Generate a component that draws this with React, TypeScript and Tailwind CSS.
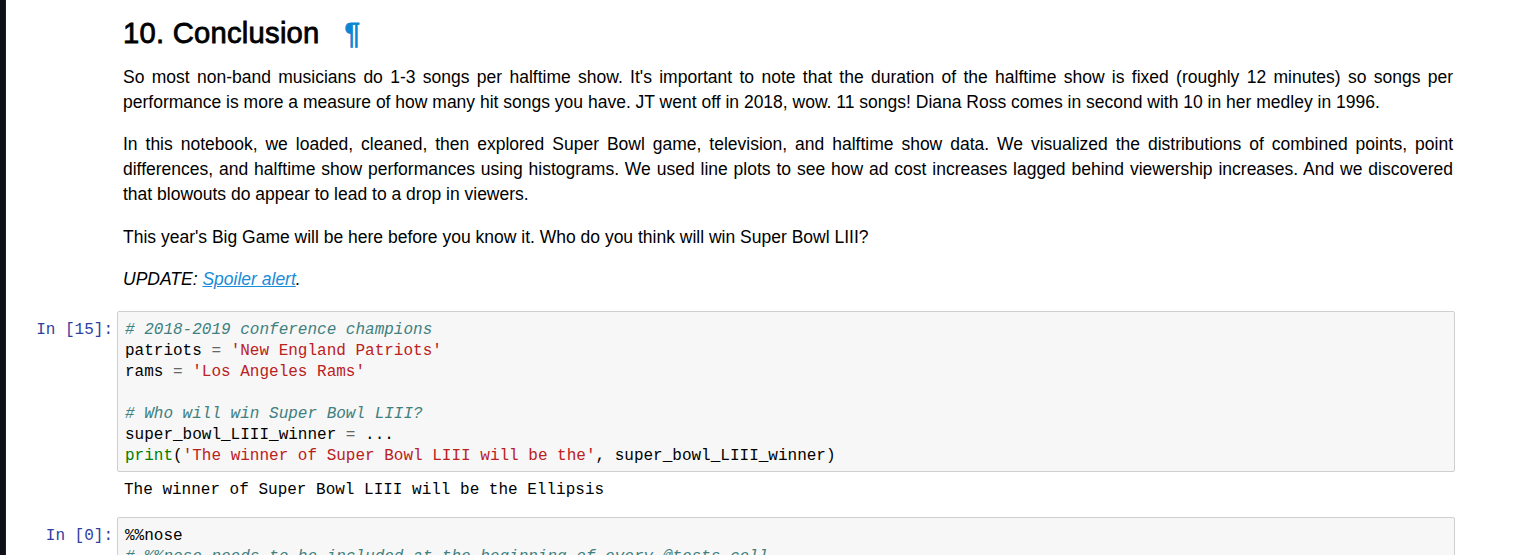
import React from "react";

const sans = "font-['Liberation_Sans',Arial,sans-serif]";
const mono = "font-['Liberation_Mono','DejaVu_Sans_Mono',monospace]";

function Prompt({ label }: { label?: string }) {
  return (
    <div
      className={`w-[111px] shrink-0 text-right pr-[4px] pt-[9px] text-[16px] leading-[21px] text-[#303f9f] ${mono}`}
    >
      {label}
    </div>
  );
}

const C = ({ children }: { children: React.ReactNode }) => (
  <span className="italic text-[#408080]">{children}</span>
);
const S = ({ children }: { children: React.ReactNode }) => (
  <span className="text-[#ba2121]">{children}</span>
);
const O = ({ children }: { children: React.ReactNode }) => (
  <span className="text-[#666666]">{children}</span>
);
const B = ({ children }: { children: React.ReactNode }) => (
  <span className="text-[#008000]">{children}</span>
);

export default function App() {
  return (
    <div className="flex min-h-screen bg-white">
      <div className="w-[6px] shrink-0 bg-[#0d1117] border-r border-[#1b2027]" />
      <div className="w-[1449px] shrink-0 pt-[18px]">
        {/* Markdown cell */}
        <div className="flex">
          <div className="w-[111px] shrink-0" />
          <div className={`flex-1 pl-[6px] pr-[2px] text-black ${sans}`}>
            <h2 className="h-[30px] leading-[30px] text-[29.2px] font-normal tracking-[0.25px] mb-[17px] [-webkit-text-stroke-width:0.8px]">
              10. Conclusion
              <a className="ml-[25px] text-[#0a87d2]">¶</a>
            </h2>
            <div className="text-[17.5px] leading-[25px] text-justify">
              <p className="mb-[17px]">
                So most non-band musicians do 1-3 songs per halftime show. It's important to note that the duration of
                the halftime show is fixed (roughly 12 minutes) so songs per performance is more a measure of how many
                hit songs you have. JT went off in 2018, wow. 11 songs! Diana Ross comes in second with 10 in her medley
                in 1996.
              </p>
              <p className="mb-[18px]">
                In this notebook, we loaded, cleaned, then explored Super Bowl game, television, and halftime show data.
                We visualized the distributions of combined points, point differences, and halftime show performances
                using histograms. We used line plots to see how ad cost increases lagged behind viewership increases.
                And we discovered that blowouts do appear to lead to a drop in viewers.
              </p>
              <p className="mb-[16.5px]">
                This year's Big Game will be here before you know it. Who do you think will win Super Bowl LIII?
              </p>
              <p>
                <em>
                  UPDATE: <a className="text-[#1a8cd8] underline">Spoiler alert</a>.
                </em>
              </p>
            </div>
          </div>
        </div>

        {/* Code cell 15 */}
        <div className="flex mt-[19px]">
          <Prompt label="In [15]:" />
          <div
            className={`flex-1 border border-[#cfcfcf] rounded-[2px] bg-[#f7f7f7] pl-[7px] pt-[8px] pb-[4px] text-[16px] leading-[21px] text-black whitespace-pre ${mono}`}
          >
            <div>
              <C># 2018-2019 conference champions</C>
            </div>
            <div>
              patriots <O>=</O> <S>'New England Patriots'</S>
            </div>
            <div>
              rams <O>=</O> <S>'Los Angeles Rams'</S>
            </div>
            <div>{" "}</div>
            <div>
              <C># Who will win Super Bowl LIII?</C>
            </div>
            <div>
              super_bowl_LIII_winner <O>=</O> ...
            </div>
            <div>
              <B>print</B>(<S>'The winner of Super Bowl LIII will be the'</S>, super_bowl_LIII_winner)
            </div>
          </div>
        </div>

        {/* Output */}
        <div className="flex mt-[8px]">
          <div className="w-[111px] shrink-0" />
          <div className={`flex-1 pl-[7px] text-[16px] leading-[21px] text-black whitespace-pre ${mono}`}>
            The winner of Super Bowl LIII will be the Ellipsis
          </div>
        </div>

        {/* Code cell 0 */}
        <div className="flex mt-[16px]">
          <Prompt label="In [0]:" />
          <div
            className={`flex-1 border border-[#cfcfcf] rounded-[2px] bg-[#f7f7f7] pl-[7px] pt-[8px] pb-[4px] text-[16px] leading-[21px] text-black whitespace-pre ${mono}`}
          >
            <div>%%nose</div>
            <div>
              <C># %%nose needs to be included at the beginning of every @tests cell</C>
            </div>
            <div>
              <C># One or more tests of the student's code</C>
            </div>
            <div>
              <C># The @solution should pass the tests</C>
            </div>
          </div>
        </div>
        <div className="h-[40px]" />
      </div>
    </div>
  );
}
